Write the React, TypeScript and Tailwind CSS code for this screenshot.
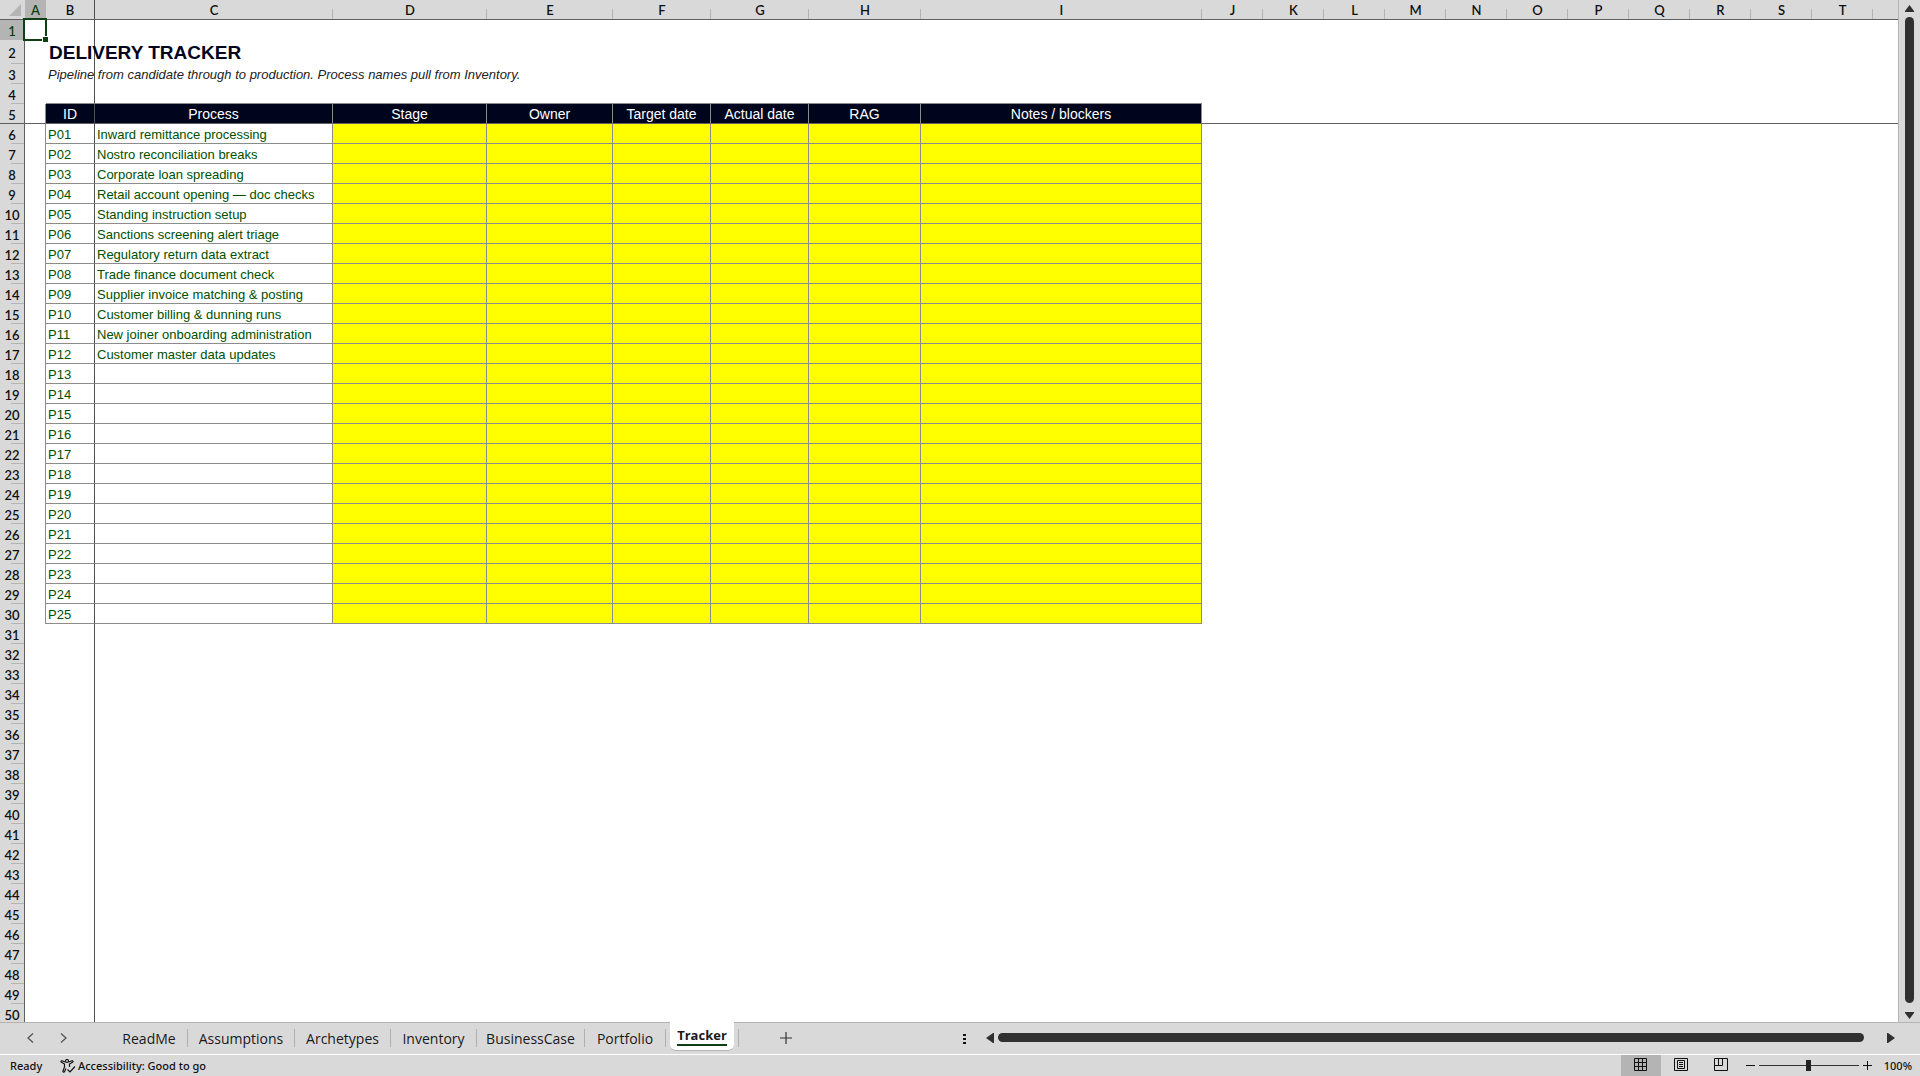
import clsx from "clsx";

const columns = [
    { name: "A", width: "w-[21px]" },
    { name: "B", width: "w-[49px]" },
    { name: "C", width: "w-[238px]" },
    { name: "D", width: "w-[154px]" },
    { name: "E", width: "w-[126px]" },
    { name: "F", width: "w-[98px]" },
    { name: "G", width: "w-[98px]" },
    { name: "H", width: "w-[112px]" },
    { name: "I", width: "w-[281px]" },
    { name: "J", width: "w-[61px]" },
    { name: "K", width: "w-[61px]" },
    { name: "L", width: "w-[61px]" },
    { name: "M", width: "w-[61px]" },
    { name: "N", width: "w-[61px]" },
    { name: "O", width: "w-[61px]" },
    { name: "P", width: "w-[61px]" },
    { name: "Q", width: "w-[61px]" },
    { name: "R", width: "w-[61px]" },
    { name: "S", width: "w-[61px]" },
    { name: "T", width: "w-[61px]" },
];

const headings = ["ID", "Process", "Stage", "Owner", "Target date", "Actual date", "RAG", "Notes / blockers"];

const processes = [
    "Inward remittance processing",
    "Nostro reconciliation breaks",
    "Corporate loan spreading",
    "Retail account opening — doc checks",
    "Standing instruction setup",
    "Sanctions screening alert triage",
    "Regulatory return data extract",
    "Trade finance document check",
    "Supplier invoice matching & posting",
    "Customer billing & dunning runs",
    "New joiner onboarding administration",
    "Customer master data updates",
];

const tabs = [
    { name: "ReadMe", width: "w-[77px]" },
    { name: "Assumptions", width: "w-[107px]" },
    { name: "Archetypes", width: "w-[96px]" },
    { name: "Inventory", width: "w-[86px]" },
    { name: "BusinessCase", width: "w-[108px]" },
    { name: "Portfolio", width: "w-[81px]" },
];

const rows = Array.from({ length: 50 }, (_, i) => i + 1);

function cellText(row: number, column: number) {
    if (row === 2 && column === 1) return "DELIVERY TRACKER";
    if (row === 3 && column === 1)
        return "Pipeline from candidate through to production. Process names pull from Inventory.";
    if (column < 1 || column > 8) return "";
    if (row === 5) return headings[column - 1];
    if (row > 5 && row <= 30) {
        if (column === 1) return "P" + String(row - 5).padStart(2, "0");
        if (column === 2) return processes[row - 6] ?? "";
    }
    return "";
}

function cellClass(row: number, column: number) {
    const inTable = column >= 1 && column <= 8;
    const inBody = inTable && row > 5 && row <= 30;
    const frozenEdge = column === 1;
    return clsx(
        "p-0 whitespace-nowrap",
        row === 2 && "pt-[2px] pl-[3px] text-[19px] leading-5 font-bold text-[#00051e]",
        row === 3 && "pt-[2px] pl-[2px] text-[13px] leading-4 italic text-[#222222]",
        row === 5 && inTable && "bg-[#00051e] text-center text-[14px] leading-4 text-white",
        inBody && "pt-[2px] pl-[2px] text-[13px] leading-4 text-[#005000]",
        inBody && column > 2 && "bg-[#ffff00]",
        frozenEdge && "border-r border-r-[#505050]",
        !frozenEdge && inTable && row >= 5 && row <= 30 && "border-r border-r-[#8c8c8c]",
        column === 0 && row >= 5 && row <= 30 && "border-r border-r-[#8c8c8c]",
        row === 4 && inTable && "border-b border-b-[#8c8c8c]",
        row === 5 && "border-b border-b-[#606060]",
        inBody && "border-b border-b-[#8c8c8c]",
    );
}

function Sheet() {
    return (
        <div className="relative min-w-0 flex-1 overflow-hidden border-r border-[#b4b4b4] bg-white">
            <table className="w-full table-fixed border-separate border-spacing-0 font-['Liberation_Sans',Arial,sans-serif]">
                <colgroup>
                    <col className="w-[25px]" />
                    {columns.map((column) => (
                        <col key={column.name} className={column.width} />
                    ))}
                    <col />
                </colgroup>
                <thead>
                    <tr className="h-5 bg-[#d9d9d9] font-[Lato,Carlito,sans-serif] text-[13px] leading-4 text-[#111111]">
                        <td className="border-b border-[#606060] p-0">
                            <svg viewBox="0 0 12 12" className="ml-[9px] size-3" aria-hidden="true">
                                <path d="M12 0V12H0z" fill="#b4b4b4" />
                            </svg>
                        </td>
                        {columns.map((column, i) => (
                            <th
                                key={column.name}
                                scope="col"
                                className={clsx(
                                    "border-b border-b-[#606060] p-0 pt-px font-semibold",
                                    i === 0 && "bg-[#b4b4b4] text-[#0f4014]",
                                    i === 1 && "border-r border-r-[#505050]",
                                    i > 1 &&
                                        "bg-[linear-gradient(#b4b4b4,#b4b4b4)] bg-[length:1px_10px] bg-[position:right_bottom] bg-no-repeat",
                                )}>
                                {column.name}
                            </th>
                        ))}
                        <td className="border-b border-[#606060] p-0" />
                    </tr>
                </thead>
                <tbody>
                    {rows.map((row) => (
                        <tr key={row} className={row === 2 ? "h-6" : "h-5"}>
                            <th
                                scope="row"
                                className={clsx(
                                    "border-r border-r-[#606060] p-0 pt-[2px] font-[Lato,Carlito,sans-serif] text-[13px] leading-4 font-semibold",
                                    row === 1 && "bg-[#b4b4b4] text-[#0f4014]",
                                    row !== 1 && "bg-[#d9d9d9] text-[#111111]",
                                    row === 5 && "border-b border-b-[#606060]",
                                    row !== 1 &&
                                        row !== 5 &&
                                        "bg-[linear-gradient(#b4b4b4,#b4b4b4)] bg-[length:13px_1px] bg-[position:right_bottom] bg-no-repeat",
                                )}>
                                {row}
                            </th>
                            {columns.map((column, i) => (
                                <td key={column.name} className={cellClass(row, i)}>
                                    {cellText(row, i)}
                                </td>
                            ))}
                            <td className={cellClass(row, 20)} />
                        </tr>
                    ))}
                </tbody>
            </table>
            {/* active cell */}
            <div className="absolute top-[18px] left-[23px] h-[23px] w-[24px] border-2 border-[#0f4014]">
                <span className="absolute -right-[3px] -bottom-[3px] size-[6px] border-t border-l border-white bg-[#0f4014]" />
            </div>
        </div>
    );
}

function VerticalScroll() {
    return (
        <div className="flex w-[21px] flex-col items-center gap-[5px] bg-[#d9d9d9] pt-[5px] pr-[1px] pb-[3px]">
            <button aria-label="Scroll up">
                <svg viewBox="0 0 9 7" className="block h-[7px] w-[9px]">
                    <path d="M4.5 0L9 6V7H0V6z" fill="#303030" />
                </svg>
            </button>
            <div className="w-[9px] flex-1 rounded-full bg-[#303030]" />
            <button aria-label="Scroll down" className="mt-1">
                <svg viewBox="0 0 9 7" className="block h-[7px] w-[9px]">
                    <path d="M4.5 7L9 1V0H0V1z" fill="#303030" />
                </svg>
            </button>
        </div>
    );
}

function TabBar() {
    return (
        <div className="flex h-8 items-stretch border-t border-[#b4b4b4] bg-[#d9d9d9] font-['Open_Sans','Noto_Sans',sans-serif] text-[14px] text-[#1a1a1a]">
            <div className="flex items-center gap-[26px] pr-[44px] pb-px pl-[27px]">
                <button aria-label="Previous sheet">
                    <svg viewBox="0 0 7 10" className="h-[10px] w-[7px]" fill="none" stroke="#555555" strokeWidth="1.3">
                        <path d="M6 .5L1 5l5 4.5" />
                    </svg>
                </button>
                <button aria-label="Next sheet">
                    <svg viewBox="0 0 7 10" className="h-[10px] w-[7px]" fill="none" stroke="#555555" strokeWidth="1.3">
                        <path d="M1 .5L6 5 1 9.5" />
                    </svg>
                </button>
            </div>
            <nav className="flex" aria-label="Sheets">
                {tabs.map((tab) => (
                    <button
                        key={tab.name}
                        className={clsx(
                            "mt-[6px] mb-[7px] flex items-center justify-center border-r border-[#b0b0b0] font-medium",
                            tab.width,
                        )}>
                        {tab.name}
                    </button>
                ))}
                <button className="mx-1 -mt-px mb-[3px] flex w-[64px] items-center justify-center rounded-b-md border-b border-[#b4b4b4] bg-white text-[13px] font-bold">
                    <span className="border-b-2 border-[#0f4014] leading-[18px]">Tracker</span>
                </button>
                <span className="mt-[6px] mb-[7px] w-px bg-[#b0b0b0]" />
            </nav>
            <button aria-label="New sheet" className="ml-[41px] pb-px">
                <svg viewBox="0 0 12 12" className="size-3" stroke="#333333" strokeWidth="1.2">
                    <path d="M6 0V12M0 6H12" />
                </svg>
            </button>
            <div className="ml-[171px] flex flex-1 items-center pr-[25px] pb-[2px]">
                <svg viewBox="0 0 3 10" className="mt-[2px] h-[10px] w-[3px]" fill="#111111" aria-hidden="true">
                    <path d="M0 0h3v2H0zM0 4h3v2H0zM0 8h3v2H0z" />
                </svg>
                <button aria-label="Scroll left" className="ml-[20px]">
                    <svg viewBox="0 0 8 10" className="h-[10px] w-2" fill="#303030">
                        <path d="M0 5L7 0h1v10H7z" />
                    </svg>
                </button>
                <div className="mr-[23px] ml-1 h-[9px] flex-1 rounded-full bg-[#303030]" />
                <button aria-label="Scroll right">
                    <svg viewBox="0 0 8 10" className="h-[10px] w-2" fill="#303030">
                        <path d="M8 5L1 0H0v10h1z" />
                    </svg>
                </button>
            </div>
        </div>
    );
}

function StatusBar() {
    return (
        <footer className="flex h-[22px] items-stretch border-t border-white bg-[#d9d9d9] pr-2 pl-[10px] font-['Noto_Sans','Open_Sans',sans-serif] text-[11px] leading-[21px] font-medium text-[#111111]">
            <span className="w-[50px]">Ready</span>
            <button className="flex items-center gap-[2px]">
                <svg viewBox="0 0 16 14" className="h-[14px] w-4" fill="none" stroke="#111111" strokeWidth="1.2">
                    <circle cx="7" cy="2" r="1.5" />
                    <path d="M5.3 3L2 1.8C1 1.5 .5 2.8 1.5 3.3L4.500 5v3L3 12c-.3 1 1 1.6 1.5 .7L6 9.500M8.700 3L12 1.800c1-.3 1.500 1 .5 1.500L9.500 5v3" />
                    <path d="M7.500 10.500l2.500 2.500 5-5.500" />
                </svg>
                Accessibility: Good to go
            </button>
            <div className="ml-auto flex items-stretch">
                <button aria-label="Normal" className="flex w-10 items-center justify-center bg-[#b4b4b4] pb-[2px]">
                    <svg viewBox="0 0 13 13" className="size-[13px]" fill="none" stroke="#111111">
                        <path d="M.5 .5h12v12H.5zM4.500 0v13M8.500 0v13M0 4.500h13M0 8.500h13" />
                    </svg>
                </button>
                <button aria-label="Page layout" className="flex w-10 items-center justify-center pb-[2px]">
                    <svg viewBox="0 0 14 13" className="h-[13px] w-[14px]" fill="none" stroke="#111111">
                        <path d="M.5 .5h13v12H.5zM3.500 2.500h7v8h-7zM5 4.500h4M5 6.500h4M5 8.500h4" />
                    </svg>
                </button>
                <button aria-label="Page break preview" className="flex w-10 items-center justify-center pb-[2px]">
                    <svg viewBox="0 0 14 13" className="h-[13px] w-[14px]" fill="none" stroke="#111111">
                        <path d="M.5 .5h13v12H.5zM.5 7.500h8v-7M4.500 .5v7" />
                    </svg>
                </button>
                <button aria-label="Zoom out" className="ml-[5px] pb-px">
                    <svg viewBox="0 0 9 9" className="size-[9px]" stroke="#111111">
                        <path d="M0 4.500h9" />
                    </svg>
                </button>
                <input
                    type="range"
                    aria-label="Zoom"
                    defaultValue={50}
                    className="mx-1 mt-[5px] h-[11px] w-[100px] appearance-none bg-[linear-gradient(#333333,#333333)] bg-[length:100%_1px] bg-center bg-no-repeat [&::-webkit-slider-thumb]:h-[11px] [&::-webkit-slider-thumb]:w-[5px] [&::-webkit-slider-thumb]:appearance-none [&::-webkit-slider-thumb]:bg-[#222222]"
                />
                <button aria-label="Zoom in" className="pb-px">
                    <svg viewBox="0 0 9 9" className="size-[9px]" stroke="#111111">
                        <path d="M0 4.500h9M4.500 0v9" />
                    </svg>
                </button>
                <button className="ml-3">100%</button>
            </div>
        </footer>
    );
}

export default function App() {
    return (
        <main className="flex h-screen flex-col overflow-hidden bg-[#d9d9d9]">
            <div className="flex min-h-0 flex-1">
                <Sheet />
                <VerticalScroll />
            </div>
            <TabBar />
            <StatusBar />
        </main>
    );
}
